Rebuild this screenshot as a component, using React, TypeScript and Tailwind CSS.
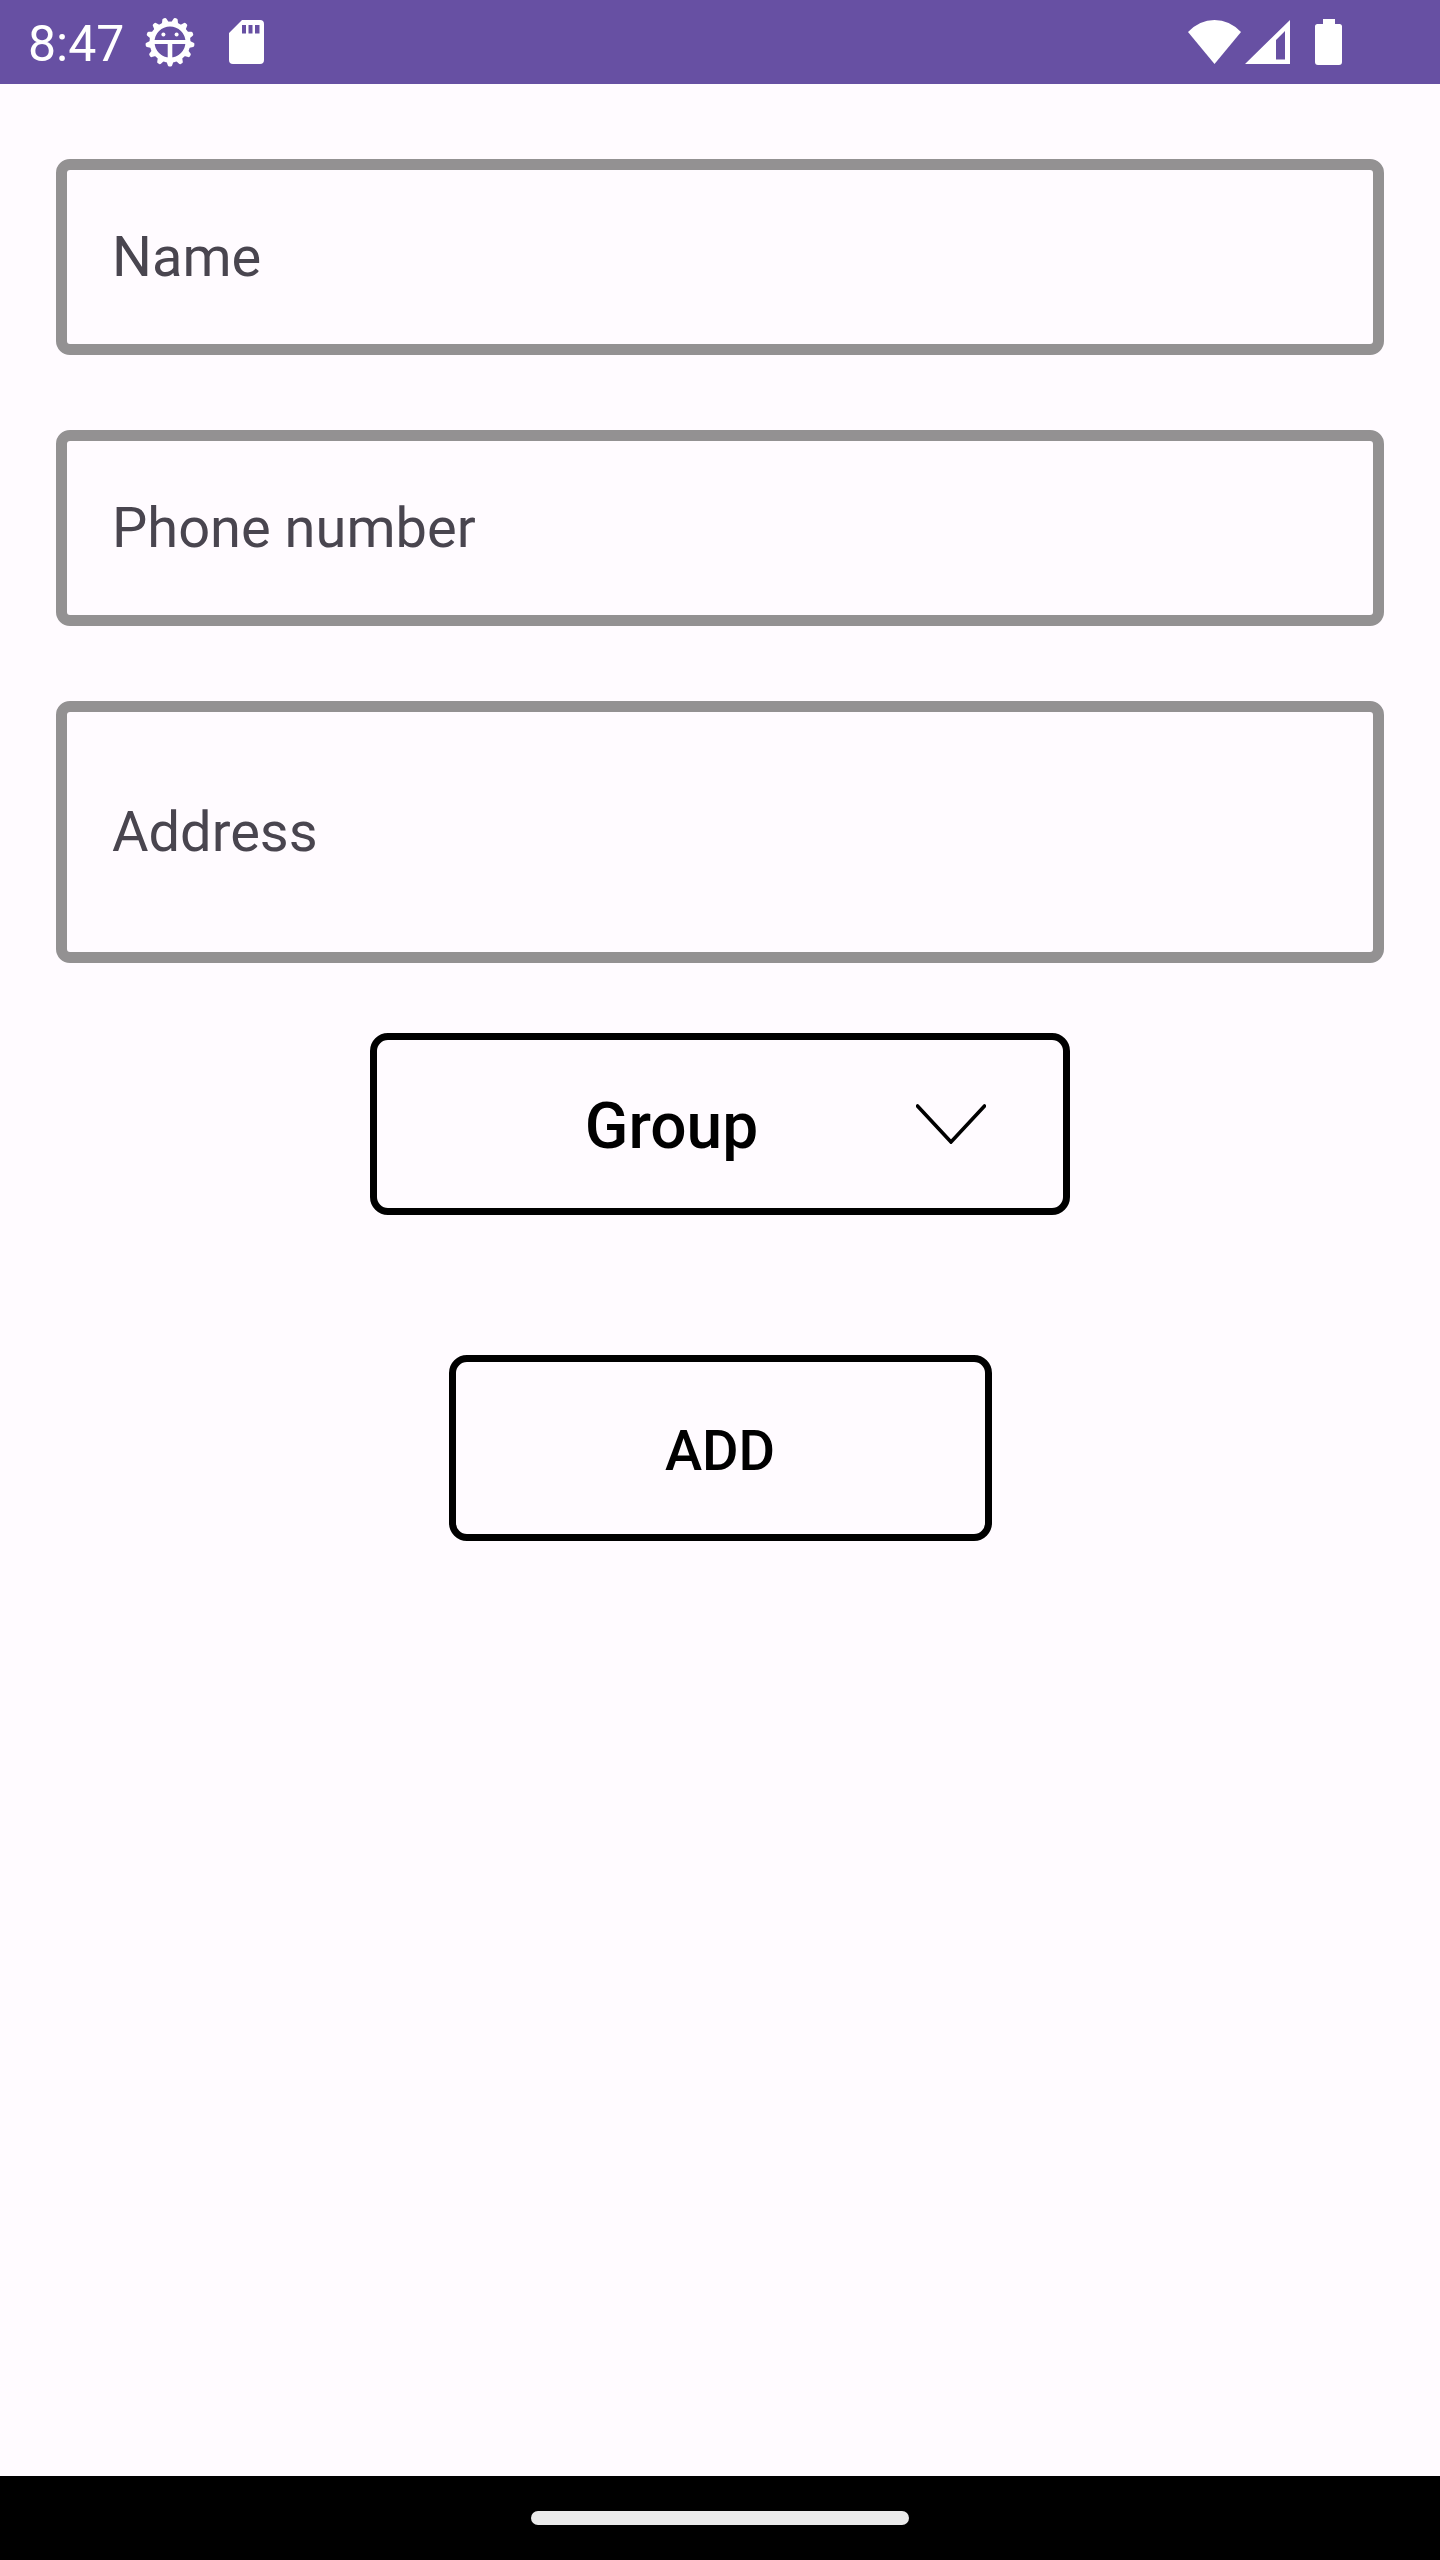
import { useState } from "react";

const teeth = Array.from({ length: 13 }, (_, i) => 90 + (i * 360) / 13);

function DebugIcon() {
  return (
    <svg viewBox="0 0 50 50" className="size-[50px]" fill="none" aria-hidden="true">
      <circle cx="25" cy="25" r="18" stroke="white" strokeWidth="5" />
      <g stroke="white" strokeWidth="3" strokeLinejoin="round" fill="white">
        {teeth.map((a) => (
          <path key={a} d="M42.500 22.400L48 24.300V25.700L42.500 27.600Z" transform={`rotate(${a} 25 25)`} />
        ))}
      </g>
      <path d="M9 25H41" stroke="white" strokeWidth="4" />
      <path d="M25 25V42" stroke="white" strokeWidth="4.600" />
      <circle cx="18.400" cy="17.600" r="2" fill="white" />
      <circle cx="31.600" cy="17.600" r="2" fill="white" />
    </svg>
  );
}

function SdCardIcon() {
  return (
    <svg viewBox="0 0 35 44" className="h-[44px] w-[35px]" aria-hidden="true">
      <path
        fill="white"
        fillRule="evenodd"
        d="M13 0H31Q35 0 35 4V40Q35 44 31 44H4Q0 44 0 40V13ZM13 5V13.500H17V5ZM19.500 5V13.500H23.500V5ZM26 5V13.500H30.500V5Z"
      />
    </svg>
  );
}

function WifiIcon() {
  return (
    <svg viewBox="0 0 53 44" className="h-[44px] w-[53px]" aria-hidden="true">
      <path fill="white" d="M26.500 44L0 12Q11.500 0 26.500 0T53 12Z" />
    </svg>
  );
}

function SignalIcon() {
  return (
    <svg viewBox="0 0 45 44" className="h-[44px] w-[45px]" aria-hidden="true">
      <path fill="white" fillRule="evenodd" d="M45 0V44H0ZM40 11L31 20V39.500H40Z" />
    </svg>
  );
}

function BatteryIcon() {
  return (
    <svg viewBox="0 0 27 46" className="h-[46px] w-[27px]" aria-hidden="true">
      <path fill="white" d="M8 0H20V5H24.500Q27 5 27 7.500V43Q27 46 24 46H3Q0 46 0 43V7.500Q0 5 2.500 5H8Z" />
    </svg>
  );
}

function StatusBar() {
  return (
    <header className="flex h-[84px] items-center justify-between bg-[#6750a3] pr-[98px] pl-7 text-white">
      <div className="flex items-center">
        <time className="pt-1 text-[50px] leading-[58px]">8:47</time>
        <div className="ml-[21px] flex items-center gap-[34px]">
          <DebugIcon />
          <SdCardIcon />
        </div>
      </div>
      <div className="flex items-center">
        <WifiIcon />
        <div className="ml-1 flex items-center gap-[25px]">
          <SignalIcon />
          <BatteryIcon />
        </div>
      </div>
    </header>
  );
}

const fieldBase =
  "block w-full rounded-[14px] border-[11px] border-[#939192] bg-transparent px-[45px] text-[56px] leading-[66px] text-[#49454f] outline-none placeholder:text-[#49454f] placeholder:opacity-100";

export default function App() {
  const [group, setGroup] = useState("");

  return (
    <div className="flex min-h-screen flex-col bg-[#fffbff] font-['Roboto',sans-serif]">
      <StatusBar />
      <main className="flex-1 px-14 pt-[75px]">
        <form className="flex flex-col items-center" onSubmit={(e) => e.preventDefault()}>
          <div className="flex w-full flex-col gap-[75px]">
            <input aria-label="Name" type="text" placeholder="Name" className={`${fieldBase} py-[54px]`} />
            <input aria-label="Phone number" type="tel" placeholder="Phone number" className={`${fieldBase} py-[54px]`} />
            <input aria-label="Address" type="text" placeholder="Address" className={`${fieldBase} py-[87px]`} />
          </div>
          <div className="relative mt-[70px] w-full max-w-[700px]">
            <select
              aria-label="Group"
              value={group}
              onChange={(e) => setGroup(e.target.value)}
              className="block w-full appearance-none rounded-[18px] border-[7px] border-black bg-transparent pt-[50px] pr-[97px] pb-[44px] text-center text-[64px] leading-[74px] font-medium text-black outline-none [text-align-last:center]"
            >
              <option value="">Group</option>
            </select>
            <svg
              viewBox="0 0 70 40"
              className="pointer-events-none absolute inset-y-0 right-[84px] my-auto h-[40px] w-[70px]"
              fill="none"
              aria-hidden="true"
            >
              <path d="M1.500 2L35 38L68.500 2" stroke="black" strokeWidth="3.600" strokeLinecap="round" />
            </svg>
          </div>
          <button
            type="submit"
            className="mt-[140px] w-full max-w-[543px] rounded-[18px] border-[7px] border-black pt-[56px] pb-[50px] text-center text-[56px] leading-[66px] font-medium text-black"
          >
            ADD
          </button>
        </form>
      </main>
      <footer className="flex h-[84px] items-center justify-center bg-black">
        <div className="h-[14px] w-[378px] rounded-full bg-[#ebebeb]" />
      </footer>
    </div>
  );
}
